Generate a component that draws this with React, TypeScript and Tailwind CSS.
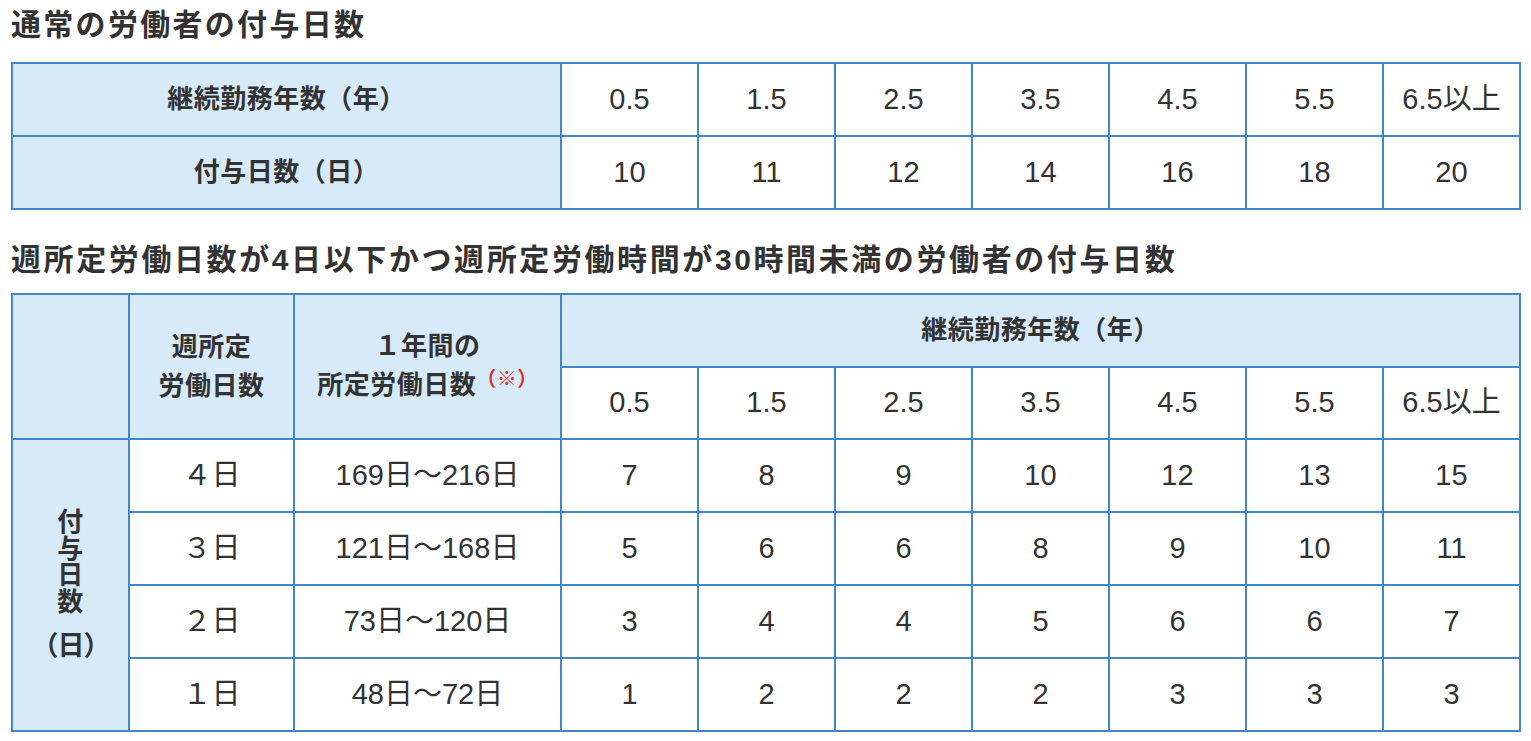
import React from "react";

const years = ["0.5", "1.5", "2.5", "3.5", "4.5", "5.5", "6.5以上"];
const normalDays = ["10", "11", "12", "14", "16", "18", "20"];

const rows: { w: string; y: string; d: string[] }[] = [
  { w: "４日", y: "169日〜216日", d: ["7", "8", "9", "10", "12", "13", "15"] },
  { w: "３日", y: "121日〜168日", d: ["5", "6", "6", "8", "9", "10", "11"] },
  { w: "２日", y: "73日〜120日", d: ["3", "4", "4", "5", "6", "6", "7"] },
  { w: "１日", y: "48日〜72日", d: ["1", "2", "2", "2", "3", "3", "3"] },
];

const th = "border-2 border-[#4387c8] bg-[#d7eaf8] text-center align-middle font-bold text-[26px] tracking-[0.5px] text-[#333]";
const td = "border-2 border-[#4387c8] bg-white text-center align-middle text-[29px] text-[#333]";

export default function App() {
  return (
    <div className="bg-white w-[1531px] min-h-[741px] pl-[11px] font-['Liberation_Sans','Noto_Sans_CJK_JP',sans-serif] text-[#333]">
      <h2 className="text-[30px] font-bold leading-[50px] tracking-[2.3px] text-[#333]">通常の労働者の付与日数</h2>
      <table className="mt-[12px] border-collapse table-fixed w-[1507px]">
        <colgroup>
          <col className="w-[549px]" />
          {years.map((y) => (
            <col key={y} className="w-[137px]" />
          ))}
        </colgroup>
        <tbody>
          <tr className="h-[73px]">
            <th className={th}>継続勤務年数（年）</th>
            {years.map((y) => (
              <td key={y} className={td}>{y}</td>
            ))}
          </tr>
          <tr className="h-[73px]">
            <th className={th}>付与日数（日）</th>
            {normalDays.map((d, i) => (
              <td key={i} className={td}>{d}</td>
            ))}
          </tr>
        </tbody>
      </table>

      <h2 className="mt-[25px] text-[30px] font-bold leading-[50px] tracking-[2.6px] text-[#333]">
        週所定労働日数が4日以下かつ週所定労働時間が30時間未満の労働者の付与日数
      </h2>
      <table className="mt-[8px] border-collapse table-fixed w-[1507px]">
        <colgroup>
          <col className="w-[117px]" />
          <col className="w-[165px]" />
          <col className="w-[267px]" />
          {years.map((y) => (
            <col key={y} className="w-[137px]" />
          ))}
        </colgroup>
        <tbody>
          <tr className="h-[73px]">
            <th rowSpan={2} className={th}></th>
            <th rowSpan={2} className={`${th} leading-[39px]`}>
              週所定
              <br />
              労働日数
            </th>
            <th rowSpan={2} className={`${th} leading-[39px]`}>
              １年間の
              <br />
              所定労働日数
              <span className="relative top-[-8px] text-[20px] text-[#e0302c]">（※）</span>
            </th>
            <th colSpan={7} className={th}>継続勤務年数（年）</th>
          </tr>
          <tr className="h-[72px]">
            {years.map((y) => (
              <td key={y} className={td}>{y}</td>
            ))}
          </tr>
          {rows.map((r, ri) => (
            <tr key={ri} className="h-[73px]">
              {ri === 0 && (
                <th rowSpan={4} className={th}>
                  <div className="flex flex-col items-center">
                    <p className="leading-[26.5px] text-[26px]">
                      付<br />与<br />日<br />数
                    </p>
                    <p className="mt-[16px] leading-[30px] text-[27px] tracking-[-1px]">（日）</p>
                  </div>
                </th>
              )}
              <td className={td}>{r.w}</td>
              <td className={td}>{r.y}</td>
              {r.d.map((d, i) => (
                <td key={i} className={td}>{d}</td>
              ))}
            </tr>
          ))}
        </tbody>
      </table>
    </div>
  );
}
